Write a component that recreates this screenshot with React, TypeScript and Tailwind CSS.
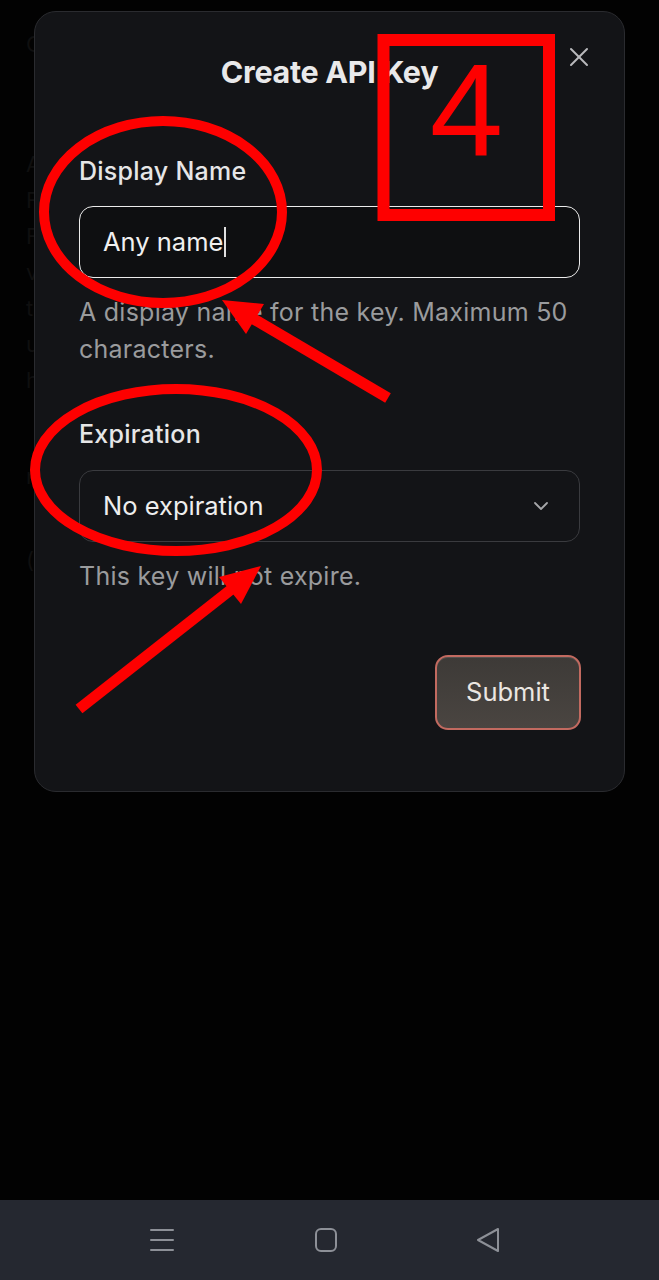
import React from "react";

function Annotations() {
  const red = "#fe0000";
  return (
    <svg
      className="absolute left-0 top-0 pointer-events-none"
      width={659}
      height={1280}
      viewBox="0 0 659 1280"
    >
      <rect x={383.5} y={40} width={165.5} height={175} fill="none" stroke={red} strokeWidth={12} />
      <ellipse cx={163} cy={212} rx={119} ry={91} fill="none" stroke={red} strokeWidth={10} />
      <ellipse cx={176} cy={470} rx={141} ry={81} fill="none" stroke={red} strokeWidth={10} />
      <line x1={388} y1={398} x2={252} y2={318} stroke={red} strokeWidth={11} />
      <polygon points="222,300 246,334 264,304" fill={red} />
      <line x1={79} y1={709} x2={233} y2={588} stroke={red} strokeWidth={11} />
      <polygon points="261,566 219,577 241,604" fill={red} />
    </svg>
  );
}

export default function App() {
  const font = { fontFamily: "Inter, 'Noto Sans', sans-serif" };
  return (
    <div className="relative w-[659px] min-h-[1280px] bg-[#020202] flex flex-col overflow-hidden" style={font}>
      {/* faint background page */}
      <div className="flex-1 pl-[26px] pt-[26px] text-[22px] leading-[36px] text-[#0f0f0f] flex flex-col">
        <div>Cr</div>
        <div className="mt-[84px]">Ar</div>
        <div>Fa</div>
        <div>Fr</div>
        <div>vn</div>
        <div>th</div>
        <div>ur</div>
        <div>ha</div>
        <div className="mt-[60px]">n</div>
        <div className="mt-[48px]">(</div>
      </div>

      {/* nav bar */}
      <div className="h-[80px] bg-[#252830] flex items-center">
        <div className="w-[659px] flex items-center">
          <svg className="ml-[149px]" width="26" height="26" viewBox="0 0 26 26">
            <g stroke="#8d9097" strokeWidth="2" strokeLinecap="round">
              <line x1="2" y1="3" x2="24" y2="3" />
              <line x1="2" y1="13" x2="24" y2="13" />
              <line x1="2" y1="23" x2="24" y2="23" />
            </g>
          </svg>
          <svg className="ml-[138px]" width="26" height="26" viewBox="0 0 26 26">
            <rect x="3" y="2" width="20" height="22" rx="5" fill="none" stroke="#8d9097" strokeWidth="2" />
          </svg>
          <svg className="ml-[136px]" width="26" height="26" viewBox="0 0 26 26">
            <path d="M23 2 L3 13 L23 24 Z" fill="none" stroke="#8d9097" strokeWidth="2" strokeLinejoin="round" />
          </svg>
        </div>
      </div>

      {/* dialog */}
      <div className="absolute left-[34px] top-[11px] w-[591px] h-[781px] rounded-[22px] border border-[#2a2b2f] bg-[#131417] px-[44px] pt-[42px] flex flex-col">
        <div className="h-[36px] leading-[36px] text-[30.5px] font-bold text-center text-[#e9e9ea] tracking-[-0.01em]">
          Create API Key
        </div>
        <button className="absolute right-[35px] top-[35px] w-[20px] h-[20px] flex items-center justify-center">
          <svg width="20" height="20" viewBox="0 0 20 20">
            <g stroke="#b9babd" strokeWidth="2" strokeLinecap="round">
              <line x1="2" y1="2" x2="18" y2="18" />
              <line x1="18" y1="2" x2="2" y2="18" />
            </g>
          </svg>
        </button>

        <div className="mt-[65px] h-[32px] leading-[32px] text-[25px] tracking-[0.01em] font-medium text-[#e6e6e7]">Display Name</div>
        <div className="mt-[19px] h-[72px] rounded-[14px] border-[1.5px] border-[#ececec] bg-[#0e0f11] flex items-center pl-[23px]">
          <span className="text-[25.5px] text-[#f0f0f0]">Any name</span>
          <span className="w-[1.5px] h-[30px] bg-[#e0e0e0] ml-[1px]" />
        </div>
        <div className="mt-[16px] text-[25px] tracking-[0.01em] leading-[37px] text-[#9a9b9d]">
          A display name for the key. Maximum 50 characters.
        </div>

        <div className="mt-[50px] h-[32px] leading-[32px] text-[25px] tracking-[0.01em] font-medium text-[#e6e6e7]">Expiration</div>
        <div className="mt-[20px] h-[72px] rounded-[14px] border-[1.5px] border-[#3a3b3f] bg-[#131417] flex items-center pl-[23px] pr-[28px]">
          <span className="flex-1 text-[25.5px] text-[#eeeeee]">No expiration</span>
          <svg width="20" height="20" viewBox="0 0 20 20">
            <path d="M4 7 L10 13 L16 7" fill="none" stroke="#a5a6a9" strokeWidth="1.8" strokeLinecap="round" strokeLinejoin="round" />
          </svg>
        </div>
        <div className="mt-[16px] text-[25px] tracking-[0.01em] leading-[37px] text-[#9a9b9d]">This key will not expire.</div>

        <div className="mt-[60px] flex justify-end">
          <button className="w-[146px] h-[75px] rounded-[13px] border-2 border-[#c26a60] bg-gradient-to-b from-[#3d3a37] to-[#4a4541] shadow-[inset_0_1px_0_rgba(255,255,255,0.12)] text-[25.5px] text-[#ebe6e1] mr-[-1px]">
            Submit
          </button>
        </div>
      </div>

      <Annotations />
      <div
        className="absolute left-[384px] top-[46px] w-[165px] h-[130px] flex items-center justify-center text-[132px] leading-[130px] text-[#fe0000]"
        style={{ fontFamily: "'Liberation Sans', Arial, sans-serif" }}
      >
        4
      </div>
    </div>
  );
}
